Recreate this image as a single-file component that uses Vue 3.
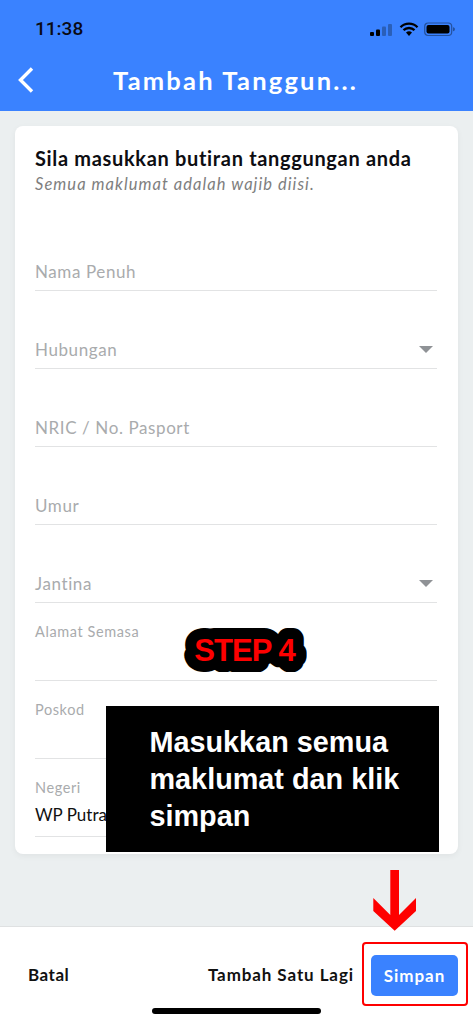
<script setup>
const fields = [
  { label: 'Nama Penuh' },
  { label: 'Hubungan', select: true },
  { label: 'NRIC / No. Pasport' },
  { label: 'Umur' },
  { label: 'Jantina', select: true },
]
const filled = [
  { label: 'Alamat Semasa', value: '' },
  { label: 'Poskod', value: '' },
  { label: 'Negeri', value: 'WP Putrajaya' },
]
</script>

<template>
  <div class="page">
    <header class="top">
      <div class="status">
        <span class="time">11:38</span>
        <div class="status-icons">
          <svg width="24" height="14" viewBox="0 0 24 14">
            <rect x="1" y="9" width="4" height="4" rx="1" fill="#000" />
            <rect x="7" y="6.5" width="4" height="6.5" rx="1" fill="#000" />
            <rect x="13" y="3.5" width="4" height="9.5" rx="1" fill="#2a5fb8" />
            <rect x="19" y="1" width="4" height="12" rx="1" fill="#2a5fb8" />
          </svg>
          <svg class="wifi" width="20" height="15" viewBox="0 0 20 15">
            <path d="M1.5 5.2a12 12 0 0 1 17 0M4.5 8.2a8 8 0 0 1 11 0" fill="none" stroke="#000" stroke-width="2.3" />
            <path d="M7 10.6a4.4 4.4 0 0 1 6 0L10 14z" fill="#000" />
          </svg>
          <svg width="32" height="15" viewBox="0 0 32 15">
            <rect x="0.7" y="1" width="27" height="12.5" rx="3.5" fill="none" stroke="#24519e" stroke-width="1.2" />
            <rect x="2.5" y="3" width="23" height="8.5" rx="2" fill="#000" />
            <path d="M29 5.2c1.400.4 1.900 1.100 1.900 2s-.5 1.700-1.900 2z" fill="#24519e" />
          </svg>
        </div>
      </div>
      <div class="nav">
        <svg class="back" width="18" height="28" viewBox="0 0 18 28">
          <path d="M15 2.500 3.500 14 15 25.500" fill="none" stroke="#fff" stroke-width="3.400" />
        </svg>
        <h1 class="title">Tambah Tanggun...</h1>
      </div>
    </header>

    <main class="body">
      <section class="card">
        <h2 class="heading">Sila masukkan butiran tanggungan anda</h2>
        <p class="sub">Semua maklumat adalah wajib diisi.</p>
        <div class="fields">
          <div v-for="f in fields" :key="f.label" class="field">
            <span class="placeholder">{{ f.label }}</span>
            <span v-if="f.select" class="caret"></span>
          </div>
        </div>
        <div v-for="f in filled" :key="f.label" class="field filled">
          <span class="float-label">{{ f.label }}</span>
          <span class="value">{{ f.value }}</span>
        </div>
      </section>
    </main>

    <footer class="bottom">
      <div class="actions">
        <span class="action batal">Batal</span>
        <span class="action">Tambah Satu Lagi</span>
        <button class="save">Simpan</button>
      </div>
      <div class="home"></div>
    </footer>

    <svg class="step" width="124" height="46" viewBox="0 0 124 46">
      <text x="61.500" y="34" text-anchor="middle" class="step-outline">STEP 4</text>
      <text x="61.500" y="34" text-anchor="middle" class="step-fill">STEP 4</text>
    </svg>

    <div class="callout">Masukkan semua maklumat dan klik simpan</div>

    <svg class="arrow" width="44" height="62" viewBox="0 0 44 62">
      <path d="M17.300 0H26v45l17-17v13L21.700 60.700 .3 41V28l17 17z" fill="#fe0000" />
    </svg>
    <div class="highlight"></div>
  </div>
</template>

<style scoped>
.page {
  position: relative;
  width: 473px;
  height: 1024px;
  display: flex;
  flex-direction: column;
  overflow: hidden;
  background: #ebeff0;
  font-family: Lato, "Open Sans", sans-serif;
  color: #111;
}
.top {
  height: 111px;
  flex: none;
  background: #3a82ff;
  display: flex;
  flex-direction: column;
}
.status {
  height: 60px;
  flex: none;
  padding: 17px 17px 0 35px;
  box-sizing: border-box;
  display: flex;
  justify-content: space-between;
  align-items: flex-start;
}
.time {
  font-family: Roboto, sans-serif;
  font-size: 19px;
  font-weight: 500;
  line-height: 24px;
  color: #0a0a14;
}
.status-icons {
  display: flex;
  align-items: center;
  gap: 6px;
  margin-top: 5px;
}
.wifi {
  margin-right: -1px;
}
.nav {
  position: relative;
  display: flex;
  justify-content: center;
  align-items: center;
  height: 42px;
}
.back {
  position: absolute;
  left: 17px;
  top: 6px;
}
.title {
  margin: -2px 0 0 -2px;
  font-size: 25.500px;
  font-weight: 700;
  letter-spacing: 2.200px;
  color: #fff;
  line-height: 42px;
}
.body {
  flex: 1;
  padding: 15px 15px 0;
  min-height: 0;
}
.card {
  height: 728px;
  box-sizing: border-box;
  padding: 20px 21px 0 20px;
  background: #fff;
  border-radius: 8px;
  box-shadow: 0 2px 6px rgba(0, 0, 0, 0.05);
}
.heading {
  margin: 0;
  font-size: 20px;
  font-weight: 700;
  line-height: 24px;
  color: #0d0d12;
  white-space: nowrap;
  letter-spacing: 0.670px;
}
.sub {
  margin: 2px 0 0;
  font-size: 16.500px;
  font-style: italic;
  line-height: 24px;
  color: #7e7e7e;
  letter-spacing: 1.050px;
}
.fields {
  margin-top: 37px;
}
.field {
  height: 78px;
  box-sizing: border-box;
  border-bottom: 1.500px solid #e2e3e4;
  display: flex;
  align-items: flex-end;
  justify-content: space-between;
  padding-bottom: 6px;
}
.field:first-child {
  height: 58px;
}
.placeholder {
  font-size: 17px;
  line-height: 24px;
  color: #a9abad;
  letter-spacing: 0.600px;
}
.caret {
  width: 0;
  height: 0;
  margin: 0 4px 9px 0;
  border-left: 7px solid transparent;
  border-right: 7px solid transparent;
  border-top: 7px solid #8f9296;
}
.filled {
  flex-direction: column;
  align-items: flex-start;
  justify-content: flex-start;
  padding: 20px 0 0;
}
.float-label {
  font-size: 14.500px;
  line-height: 18px;
  color: #a9abad;
  letter-spacing: 0.600px;
}
.value {
  margin-top: 7px;
  font-size: 17px;
  line-height: 22px;
  color: #111;
  white-space: nowrap;
}
.bottom {
  height: 98px;
  flex: none;
  box-sizing: border-box;
  background: #fff;
  border-top: 1px solid #dfe1e2;
  display: flex;
  flex-direction: column;
  align-items: center;
}
.actions {
  width: 100%;
  box-sizing: border-box;
  height: 80px;
  padding: 28px 15px 0 28px;
  display: flex;
  align-items: flex-start;
}
.action {
  font-size: 17px;
  font-weight: 700;
  line-height: 40px;
  color: #111;
  letter-spacing: 0.900px;
}
.batal {
  margin-right: auto;
  letter-spacing: 0.500px;
}
.save {
  margin-left: 17px;
  width: 87px;
  height: 41px;
  border: 0;
  border-radius: 5px;
  background: #3a82ff;
  color: #fff;
  font-family: inherit;
  font-size: 17px;
  font-weight: 700;
  letter-spacing: 0.950px;
}
.home {
  width: 169px;
  height: 6.500px;
  margin-top: 0.500px;
  border-radius: 3px;
  background: #000;
}
.step {
  position: absolute;
  left: 183px;
  top: 627px;
}
.step-outline,
.step-fill {
  font-family: "Liberation Sans", Arial, sans-serif;
  font-size: 31px;
  font-weight: 700;
  letter-spacing: -1px;
}
.step-outline {
  fill: #000;
  stroke: #000;
  stroke-width: 22px;
  stroke-linejoin: round;
}
.step-fill {
  fill: #fe0000;
}
.callout {
  position: absolute;
  left: 105.500px;
  top: 706px;
  width: 333px;
  height: 146px;
  box-sizing: border-box;
  padding: 17.500px 20px 0 44px;
  background: #000;
  color: #fff;
  font-family: "Liberation Sans", Arial, sans-serif;
  font-size: 28.800px;
  font-weight: 700;
  line-height: 37px;
}
.arrow {
  position: absolute;
  left: 373px;
  top: 870px;
}
.highlight {
  position: absolute;
  left: 362px;
  top: 942px;
  width: 106px;
  height: 64px;
  box-sizing: border-box;
  border: 2.500px solid #fe0000;
  border-radius: 4px;
}
</style>
